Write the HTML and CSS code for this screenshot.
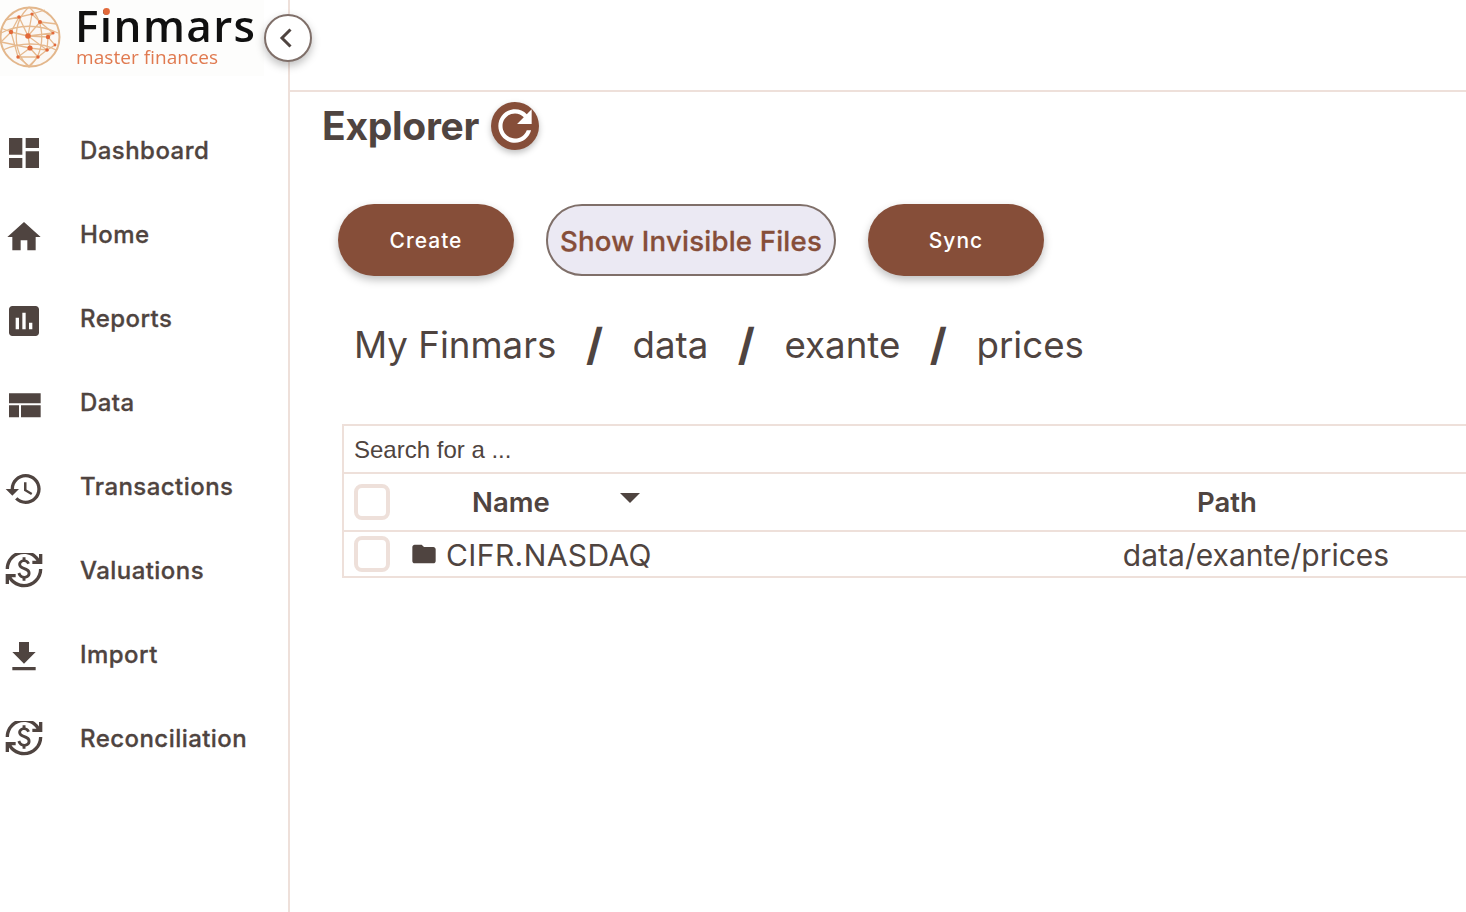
FILE: index.html
```html
<!DOCTYPE html>
<html lang="en">
<head>
<meta charset="utf-8">
<title>Finmars Explorer</title>
<link rel="stylesheet" href="styles.css">
</head>
<body>
<div class="app">
  <aside class="sidebar">
    <div class="brand">
      <svg class="logo" viewBox="0 0 264 76" width="264" height="76" aria-label="Finmars master finances">
        <circle cx="30" cy="37" r="29.500" fill="#fbf8f5" stroke="#e3b78c" stroke-width="2"/>
        <g fill="none" stroke="#e6b98e" stroke-width="1.300">
          <path d="M11 32L19 17L32 14L40 22L53 33L48 37L28 36L11 32L18 57L30 48L28 36L19 17M32 14L28 36L40 22M28 36L53 33M28 36L47 50L30 48L38 57L47 50L48 37L55 45L47 50M18 57L38 57L29 66L18 57M11 32L1 28M1 42L11 32M1 42L30 48M19 17L5 20M32 14L45 10M40 22L57 24"/>
          <path d="M29 7C12 22 12 52 29 67C46 52 46 22 29 7M1 33C18 24 40 24 58 33M3 50C20 42 42 42 56 50"/>
        </g>
        <g fill="#e2693a">
          <circle cx="11" cy="32" r="2.200"/><circle cx="28" cy="36" r="2.800"/><circle cx="19" cy="17" r="1.800"/>
          <circle cx="32" cy="14" r="1.600"/><circle cx="40" cy="22" r="2"/><circle cx="53" cy="33" r="1.600"/>
          <circle cx="48" cy="37" r="2.200"/><circle cx="30" cy="48" r="2.600"/><circle cx="47" cy="50" r="1.800"/>
          <circle cx="18" cy="57" r="1.700"/><circle cx="38" cy="57" r="1.700"/><circle cx="55" cy="45" r="1.400"/>
        </g>
        <text class="logo-name" x="75" y="42" textLength="180" lengthAdjust="spacing">Finmars</text>
        <circle cx="106.500" cy="11.500" r="3.400" fill="#e2693a"/>
        <text class="logo-tag" x="76" y="64" textLength="142" lengthAdjust="spacing">master finances</text>
      </svg>
    </div>
    <nav class="nav">
      <a class="nav-item"><svg class="nav-icon" viewBox="0 0 24 24"><path d="M3 13h8V3H3v10zm0 8h8v-6H3v6zm10 0h8V11h-8v10zm0-18v6h8V3h-8z"/></svg><span class="nav-label">Dashboard</span></a>
      <a class="nav-item"><svg class="nav-icon" viewBox="0 0 24 24"><path d="M10 20v-6h4v6h5v-8h3L12 3 2 12h3v8z"/></svg><span class="nav-label">Home</span></a>
      <a class="nav-item"><svg class="nav-icon" viewBox="0 0 24 24"><path d="M19 3H5c-1.100 0-2 .9-2 2v14c0 1.100.9 2 2 2h14c1.100 0 2-.9 2-2V5c0-1.100-.9-2-2-2zM9 17H7v-7h2v7zm4 0h-2V7h2v10zm4 0h-2v-4h2v4z"/></svg><span class="nav-label">Reports</span></a>
      <a class="nav-item"><svg class="nav-icon" viewBox="0 0 24 24"><path d="M3 5h19v6H3zM3 12.200h6v7.200H3zM10.200 12.200H22v7.200H10.200z"/></svg><span class="nav-label">Data</span></a>
      <a class="nav-item"><svg class="nav-icon" viewBox="0 0 24 24"><path d="M13 3c-4.970 0-9 4.030-9 9H1l3.890 3.890.07.14L9 12H6c0-3.870 3.130-7 7-7s7 3.130 7 7-3.130 7-7 7c-1.930 0-3.680-.79-4.940-2.060l-1.420 1.420C8.270 19.990 10.510 21 13 21c4.970 0 9-4.030 9-9s-4.030-9-9-9zm-1 5v5l4.280 2.540.72-1.210-3.500-2.080V8H12z"/></svg><span class="nav-label">Transactions</span></a>
      <a class="nav-item"><svg class="nav-icon" viewBox="0 2.400 24 24"><path d="M12.890 11.100c-1.780-.59-2.640-.96-2.640-1.900 0-1.020 1.110-1.390 1.810-1.390 1.310 0 1.790.99 1.900 1.340l1.580-.67c-.15-.44-.82-1.910-2.640-2.230V5h-1.750v1.260c-2.600.56-2.620 2.850-2.620 2.960 0 2.270 2.250 2.910 3.350 3.310 1.580.56 2.280 1.070 2.280 2.030 0 1.130-1.050 1.610-1.980 1.610-1.820 0-2.340-1.870-2.400-2.090l-1.660.67c.63 2.190 2.280 2.780 3.020 2.960V19h1.750v-1.240c.52-.09 3.020-.59 3.020-3.220.01-1.390-.6-2.610-3.020-3.440zM3 21H1v-6h6v2H4.520c1.610 2.410 4.360 4 7.480 4 4.970 0 9-4.030 9-9h2c0 6.080-4.920 11-11 11-3.720 0-7.010-1.850-9-4.670V21zm-2-9C1 5.920 5.920 1 12 1c3.720 0 7.010 1.850 9 4.670V3h2v6h-6V7h2.480C17.870 4.590 15.120 3 12 3c-4.970 0-9 4.030-9 9H1z"/></svg><span class="nav-label">Valuations</span></a>
      <a class="nav-item"><svg class="nav-icon" viewBox="0 0 24 24"><path d="M19 9h-4V3H9v6H5l7 7 7-7zM5 18v2h14v-2H5z"/></svg><span class="nav-label">Import</span></a>
      <a class="nav-item"><svg class="nav-icon" viewBox="0 2.400 24 24"><path d="M12.890 11.100c-1.780-.59-2.640-.96-2.640-1.900 0-1.020 1.110-1.390 1.810-1.390 1.310 0 1.790.99 1.900 1.340l1.580-.67c-.15-.44-.82-1.910-2.640-2.230V5h-1.750v1.260c-2.600.56-2.620 2.850-2.620 2.960 0 2.270 2.250 2.910 3.350 3.310 1.580.56 2.280 1.070 2.280 2.030 0 1.130-1.050 1.610-1.980 1.610-1.820 0-2.340-1.870-2.400-2.090l-1.660.67c.63 2.190 2.280 2.780 3.020 2.960V19h1.750v-1.240c.52-.09 3.020-.59 3.020-3.220.01-1.390-.6-2.610-3.020-3.440zM3 21H1v-6h6v2H4.520c1.610 2.410 4.360 4 7.480 4 4.970 0 9-4.030 9-9h2c0 6.080-4.920 11-11 11-3.720 0-7.010-1.850-9-4.670V21zm-2-9C1 5.920 5.920 1 12 1c3.720 0 7.010 1.850 9 4.670V3h2v6h-6V7h2.480C17.870 4.590 15.120 3 12 3c-4.970 0-9 4.030-9 9H1z"/></svg><span class="nav-label">Reconciliation</span></a>
    </nav>
    <button class="collapse" aria-label="Collapse sidebar">
      <svg viewBox="0 0 24 24" width="24" height="24"><path d="M14.500 3.500L6 12l8.500 8.500" fill="none" stroke="#4f4440" stroke-width="3"/></svg>
    </button>
  </aside>
  <main class="main">
    <header class="topbar"></header>
    <div class="title-row">
      <h1 class="title">Explorer</h1>
      <button class="refresh" aria-label="Refresh">
        <svg viewBox="0 0 24 24" width="50" height="50"><path fill="#fff" d="M17.650 6.350C16.200 4.900 14.210 4 12 4c-4.420 0-7.990 3.580-7.990 8s3.570 8 7.990 8c3.730 0 6.840-2.550 7.730-6h-2.080c-.82 2.330-3.040 4-5.650 4-3.310 0-6-2.690-6-6s2.690-6 6-6c1.660 0 3.140.69 4.220 1.780L13 11h7V4l-2.350 2.350z"/></svg>
      </button>
    </div>
    <div class="actions">
      <button class="btn btn-solid">Create</button>
      <button class="btn btn-soft">Show Invisible Files</button>
      <button class="btn btn-solid">Sync</button>
    </div>
    <div class="crumbs">
      <span>My Finmars</span><span class="sep">/</span>
      <span>data</span><span class="sep">/</span>
      <span>exante</span><span class="sep">/</span>
      <span>prices</span>
    </div>
    <section class="table">
      <div class="search">Search for a ...</div>
      <div class="row row-head">
        <span class="check"></span>
        <span class="col-name">Name<span class="caret"></span></span>
        <span class="col-path">Path</span>
      </div>
      <div class="row row-body">
        <span class="check"></span>
        <span class="col-file">
          <svg class="folder" viewBox="0 0 24 24"><path d="M10 4H4c-1.100 0-1.990.9-1.990 2L2 18c0 1.100.9 2 2 2h16c1.100 0 2-.9 2-2V8c0-1.100-.9-2-2-2h-8l-2-2z"/></svg>
          <span class="file-name">CIFR.NASDAQ</span>
        </span>
        <span class="col-loc">data/exante/prices</span>
      </div>
    </section>
  </main>
</div>
</body>
</html>
```

FILE: styles.css
```css
* { box-sizing: border-box; }
html, body { margin: 0; height: 100%; overflow: hidden; background: #fff; }
body { font-family: Inter, "Liberation Sans", sans-serif; color: #4f4440; }
.app { display: flex; height: 912px; }

.sidebar { position: relative; flex: 0 0 290px; border-right: 2px solid #eee0da; }
.brand { height: 76px; margin-bottom: 35px; background: #fdfdfc; margin-right: 24px; }
.logo { display: block; filter: blur(.35px); }
.logo-name { font-family: "Open Sans", sans-serif; font-size: 44px; font-weight: 600; fill: #101010; }
.logo-tag { font-family: "Open Sans", sans-serif; font-size: 19px; fill: #e07a50; }
.nav { display: flex; flex-direction: column; }
.nav-item { display: flex; align-items: center; height: 84px; padding-left: 4px; }
.nav-icon { flex: 0 0 40px; width: 40px; height: 40px; fill: #4f4440; }
.nav-label { margin: 0 0 5px 36px; font-size: 24px; font-weight: 500; letter-spacing: .45px; -webkit-text-stroke: .3px #4f4440; }
.collapse {
  position: absolute; top: 14px; left: 264px; width: 48px; height: 48px; padding: 0;
  display: flex; align-items: center; justify-content: center;
  border-radius: 50%; border: 2px solid #7f6f69; background: #fff;
  box-shadow: 0 4px 8px rgba(0,0,0,.25);
}

.main { flex: 1; min-width: 0; }
.topbar { height: 92px; border-bottom: 2px solid #eee0da; }
.title-row { display: flex; align-items: center; gap: 12px; height: 58px; padding: 10px 0 0 32px; }
.title { margin: 0; font-size: 39px; font-weight: 700; line-height: 48px; letter-spacing: -.3px; }
.refresh {
  width: 48px; height: 48px; padding: 0; border: 0; border-radius: 50%; background: #864e39;
  display: flex; align-items: center; justify-content: center; overflow: visible;
  box-shadow: 0 3px 6px rgba(0,0,0,.25);
}
.refresh svg { flex: none; }

.actions { display: flex; gap: 32px; margin: 54px 0 0 48px; }
.btn { height: 72px; border-radius: 36px; font-family: Inter, sans-serif; }
.btn-solid {
  width: 176px; border: 0; background: #864e39; color: #fff;
  font-size: 21px; font-weight: 500; letter-spacing: 1px;
  box-shadow: 0 4px 8px rgba(0,0,0,.25);
}
.btn-soft {
  width: 290px; padding: 2px 0 0; border: 2px solid #7f6f69; background: #ebe9f3; color: #864e39;
  font-size: 27.600px; font-weight: 500; letter-spacing: .2px; -webkit-text-stroke: .3px #864e39;
}

.crumbs { display: flex; align-items: center; height: 46px; margin: 45px 0 0 64px; font-size: 36.700px; }
.sep { margin: 0 29.500px; font-weight: 700; font-size: 44px; line-height: 46px; }

.table { margin: 57px 0 0 52px; width: 1300px; border: solid #eee0da; border-width: 2px 0 2px 2px; }
.search { height: 46px; line-height: 48px; padding-left: 10px; font-family: "Liberation Sans", sans-serif; font-size: 24px; }
.row { display: flex; align-items: center; padding-left: 10px; border-top: 2px solid #eee0da; }
.row-head { height: 58px; }
.row-body { height: 46px; }
.check { flex: none; width: 36px; height: 36px; border: 4px solid #eee0da; border-radius: 8px; }
.col-name { position: relative; flex: 0 0 528px; margin-left: 82px; font-size: 27.500px; font-weight: 600; }
.caret {
  position: absolute; left: 148px; top: 8px; width: 0; height: 0;
  border: solid transparent; border-width: 10px 10px 0; border-top-color: #4f4440;
}
.col-path { flex: 0 0 454px; text-align: center; font-size: 27.500px; font-weight: 600; }
.col-file { display: flex; align-items: center; gap: 8px; flex: 0 0 590px; margin-left: 20px; font-size: 30px; }
.file-name { letter-spacing: .4px; padding-top: 2px; }
.folder { flex: none; width: 28px; height: 28px; fill: #4f4440; }
.col-loc { flex: 0 0 512px; padding-top: 2px; text-align: center; font-size: 30px; }
```
